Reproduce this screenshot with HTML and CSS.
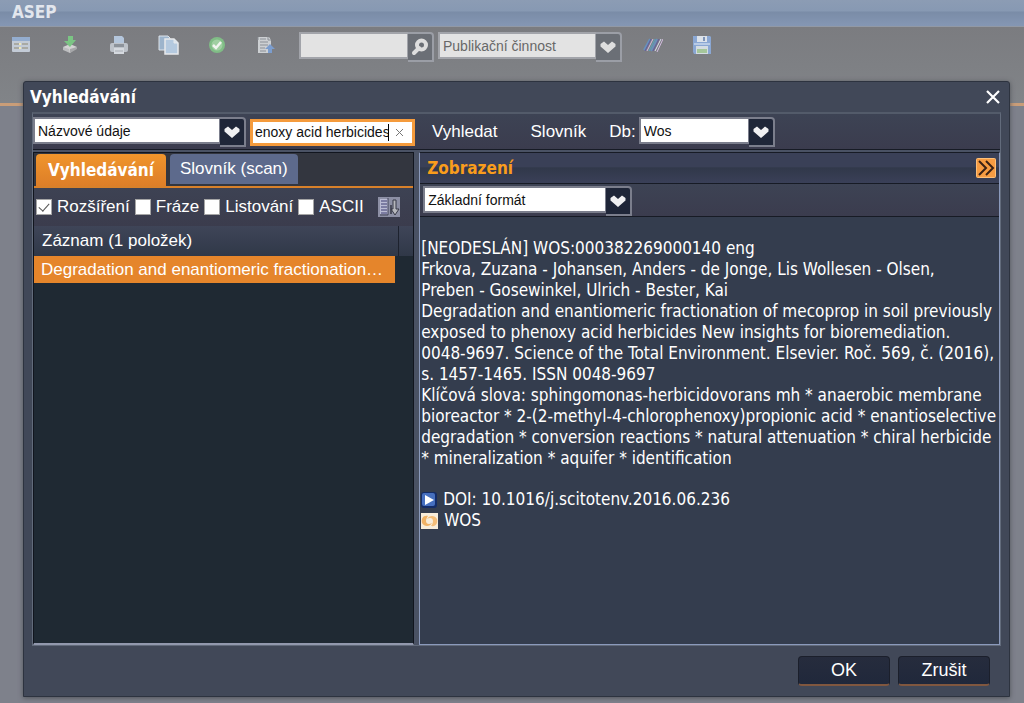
FILE: index.html
```html
<!DOCTYPE html>
<html lang="cs">
<head>
<meta charset="utf-8">
<title>ASEP</title>
<link rel="stylesheet" href="styles.css">
</head>
<body>
<svg width="0" height="0" class="defs" aria-hidden="true">
  <symbol id="chevron" viewBox="0 0 18 14"><path d="M1.500 4 L5 1.500 L9 5 L13 1.500 L16.500 4 V6.500 L9 13 L1.500 6.500 Z" fill="currentColor"/></symbol>
</svg>
<header class="app-title">ASEP</header>
<main class="app">
  <div class="app-bar">
    <button class="tool" aria-label="Formulář"><svg width="20" height="18" viewBox="0 0 20 18"><rect x="1" y="1" width="18" height="15" rx="1" fill="#c3cbd6"/><rect x="1" y="1" width="18" height="4" fill="#94adcf"/><path d="M3 8h6M11 8h6M3 12h6M11 12h6" stroke="#a9aaa4" stroke-width="2"/><path d="M8 8h2M8 12h2" stroke="#eee7b9" stroke-width="2"/></svg></button>
    <button class="tool" aria-label="Import"><svg width="18" height="20" viewBox="0 0 18 20"><path d="M2 12 L9 9 L16 12 L9 18 Z" fill="#d3d3d3"/><path d="M2 12 L8 14 L9 18 L2 15 Z" fill="#bcbdbf"/><path d="M9 14 L16 12 V14 L9 18 Z" fill="#a6a7a9"/><path d="M7 1h5v4h3L9 12 3 6h4z" fill="#7bc584"/></svg></button>
    <button class="tool" aria-label="Tisk"><svg width="20" height="20" viewBox="0 0 20 20"><path d="M5 1h8l2 2v7H5z" fill="#b4c6dc"/><rect x="1" y="8" width="18" height="9" rx="2" fill="#bdc2c9"/><path d="M5 9h10v3H5z" fill="#8d939b"/><path d="M5 13h10v6H5z" fill="#d5d9df"/><path d="M6 16h8" stroke="#a7acb3"/></svg></button>
    <button class="tool" aria-label="Kopírovat"><svg width="22" height="22" viewBox="0 0 22 22"><path d="M2 2h9l2 2v12H2z" fill="#9db4cc" stroke="#dde3e9"/><path d="M8 5h9l4 4v11H8z" fill="#b4c9df" stroke="#e7e9ec" stroke-width="1.500"/><path d="M17 5v4h4" fill="#d9e3ed" stroke="#e7e9ec"/></svg></button>
    <button class="tool" aria-label="Potvrdit"><svg width="18" height="18" viewBox="0 0 18 18"><circle cx="9" cy="9" r="8" fill="#80bd86"/><circle cx="9" cy="9" r="5.500" fill="#a0cfa2"/><path d="M5 9l3 3 5-6" fill="none" stroke="#f1f4f0" stroke-width="2.500"/></svg></button>
    <button class="tool" aria-label="Export záznamu"><svg width="20" height="20" viewBox="0 0 20 20"><path d="M2 2h11l2 3v13H2z" fill="#cdd0d3"/><path d="M2 2v3M4 4h6M4 7h8M4 10h8M4 13h5M4 16h6M12 2v3h3" fill="none" stroke="#8a8f96"/><path d="M14 9l5 5h-3v4h-4v-4H9z" fill="#7b9dce"/></svg></button>
    <div class="combo muted search">
      <input type="text" aria-label="Hledat">
      <button class="arrow" aria-label="Spustit hledání"><svg width="18" height="18" viewBox="0 0 18 18"><circle cx="10.500" cy="7" r="4.500" fill="none" stroke="currentColor" stroke-width="4"/><path d="M8 10 L3 15" stroke="currentColor" stroke-width="4" stroke-linecap="round"/></svg></button>
    </div>
    <div class="combo muted source">
      <select aria-label="Databáze"><option>Publikační činnost</option></select>
      <span class="arrow"><svg width="18" height="14"><use href="#chevron"/></svg></span>
    </div>
    <button class="tool" aria-label="Čárový kód"><svg width="20" height="18" viewBox="0 0 20 18"><path d="M1 14L7 3M8 15L14 3" stroke="#6890ba" stroke-width="2"/><path d="M4 15L10 3M14 16L20 3" stroke="#d4bce0"/><path d="M6 15L12 3" stroke="#56a6bb"/><path d="M2 15L8 3M10 15L16 3" stroke="#6258a0"/><path d="M12 15L18 3" stroke="#dcdff0"/></svg></button>
    <button class="tool" aria-label="Uložit"><svg width="20" height="20" viewBox="0 0 20 20"><path d="M1 1h17l1 1v17H2l-1-2z" fill="#8aa7d3"/><path d="M5 1h10v6H5z" fill="#dce2ea"/><path d="M12 2v4" stroke="#7d93b7" stroke-width="2"/><path d="M2 9h16" stroke="#b8cbe6" stroke-width="2"/><path d="M4 11h12v8H4z" fill="#d4dce2"/><path d="M5 14h10v4H5z" fill="#a5c69a"/></svg></button>
  </div>
</main>

<section class="dialog" role="dialog" aria-labelledby="dialog-title">
  <header class="dialog-head">
    <h1 id="dialog-title">Vyhledávání</h1>
    <button class="close" aria-label="Zavřít"><svg width="16" height="16" viewBox="0 0 16 16"><path d="M2 2l12 12M14 2L2 14" stroke="#fff" stroke-width="2.200"/></svg></button>
  </header>
  <div class="frame">
    <div class="query-bar">
      <div class="combo field">
        <select aria-label="Pole"><option>Názvové údaje</option></select>
        <span class="arrow"><svg width="18" height="14"><use href="#chevron"/></svg></span>
      </div>
      <div class="term">
        <input type="text" aria-label="Hledaný výraz" value="enoxy acid herbicides">
        <span class="caret"></span>
        <button aria-label="Vymazat"><svg width="9" height="9" viewBox="0 0 9 9"><path d="M1 1l7 7M8 1L1 8" stroke="#777"/></svg></button>
      </div>
      <button class="action">Vyhledat</button>
      <button class="action dictionary">Slovník</button>
      <label class="db-label" for="db">Db:</label>
      <div class="combo db">
        <select id="db"><option>Wos</option></select>
        <span class="arrow"><svg width="18" height="14"><use href="#chevron"/></svg></span>
      </div>
    </div>
    <div class="panes">
      <section class="results">
        <div class="tabs">
          <button class="tab active">Vyhledávání</button>
          <button class="tab">Slovník (scan)</button>
        </div>
        <div class="options">
          <label><input type="checkbox" checked>Rozšíření</label>
          <label><input type="checkbox">Fráze</label>
          <label><input type="checkbox">Listování</label>
          <label><input type="checkbox">ASCII</label>
          <button class="sort" aria-label="Řazení"><svg width="22" height="20" viewBox="0 0 22 20"><rect width="22" height="20" fill="#8d90a5"/><path d="M2 2h8v15H2z" fill="#b9bbd3"/><path d="M3 4h6M3 7h6M3 10h6M3 13h6M3 16h6" stroke="#3e3f73"/><path d="M10 1v17H2" fill="none" stroke="#42455d"/><path d="M12 17V8h2v9z" fill="#4b4d5c"/><path d="M15 3h3v9h3l-4 6-4-6h2z" fill="#b7b8bd" stroke="#373946"/></svg></button>
        </div>
        <table class="records">
          <thead><tr><th>Záznam (1 položek)</th><th class="gutter"></th></tr></thead>
          <tbody><tr><td><div>Degradation and enantiomeric fractionation…</div></td><td></td></tr></tbody>
        </table>
      </section>
      <section class="preview">
        <header class="preview-head">
          <h2>Zobrazení</h2>
          <button class="expand" aria-label="Rozbalit"><svg width="20" height="20" viewBox="0 0 20 20"><rect x="0.500" y="0.500" width="19" height="19" rx="1" fill="#f79c42" stroke="#ffc078"/><path d="M3 3l7 7-7 7M10 3l7 7-7 7" fill="none" stroke="#3a2115" stroke-width="2"/></svg></button>
        </header>
        <div class="format-bar">
          <div class="combo format">
            <select aria-label="Formát"><option>Základní formát</option></select>
            <span class="arrow"><svg width="18" height="14"><use href="#chevron"/></svg></span>
          </div>
        </div>
        <article class="record">
          <p>[NEODESLÁN] WOS:000382269000140 eng</p>
          <p>Frkova, Zuzana - Johansen, Anders - de Jonge, Lis Wollesen - Olsen,<br>Preben - Gosewinkel, Ulrich - Bester, Kai</p>
          <p>Degradation and enantiomeric fractionation of mecoprop in soil previously<br>exposed to phenoxy acid herbicides New insights for bioremediation.</p>
          <p>0048-9697. Science of the Total Environment. Elsevier. Roč. 569, č. (2016),<br>s. 1457-1465. ISSN 0048-9697</p>
          <p>Klíčová slova: sphingomonas-herbicidovorans mh * anaerobic membrane<br>bioreactor * 2-(2-methyl-4-chlorophenoxy)propionic acid * enantioselective<br>degradation * conversion reactions * natural attenuation * chiral herbicide<br>* mineralization * aquifer * identification</p>
          <p class="link first"><a href="#doi"><svg width="16" height="16" viewBox="0 0 16 16"><rect width="16" height="16" rx="3" fill="#142c66"/><rect x="1" y="1" width="13" height="13" rx="2" fill="#466fbe"/><path d="M4 3l9 5-9 5z" fill="#fff"/></svg>DOI: 10.1016/j.scitotenv.2016.06.236</a></p>
          <p class="link"><a href="#wos"><svg width="17" height="16" viewBox="0 0 17 16"><rect width="17" height="16" fill="#f8eddb"/><path d="M7 3C2 2 0 6 1 10c2 4 8 4 10 0-3 2-6 1-6-2 0-2 1-4 2-5z" fill="#f0b266"/><path d="M10 13c5 1 7-3 6-7-2-4-8-4-10 0 3-2 6-1 6 2 0 2-1 4-2 5z" fill="#f5bd78"/></svg>WOS</a></p>
        </article>
      </section>
    </div>
  </div>
  <footer class="dialog-foot">
    <button>OK</button>
    <button>Zrušit</button>
  </footer>
</section>
</body>
</html>
```
FILE: styles.css
```css
* { box-sizing: border-box; }
html, body { height: 100%; }
body {
  margin: 0;
  display: flex;
  flex-direction: column;
  position: relative;
  overflow: hidden;
  background: #7e818b;
  color: #fff;
  font-family: "Liberation Sans", Arial, sans-serif;
  font-size: 17px;
}
button, input, select { font: inherit; color: inherit; margin: 0; }
button { padding: 0; border: 0; background: none; }
svg { display: block; }
h1, h2, p { margin: 0; }
.defs { position: absolute; }

.app-title {
  height: 27px;
  padding-left: 12px;
  background: linear-gradient(#8c9cb4 0, #8799b3 11px, #7a8ca7 12px, #8496b3 25px);
  border-bottom: 1px solid #9299a5;
  color: #e2e6ed;
  font: bold 17px/24px "DejaVu Sans Condensed", "Noto Sans", sans-serif;
}
.app-bar {
  display: flex;
  align-items: flex-start;
  height: 79px;
  padding-top: 5px;
  background: linear-gradient(#7b7c80, #818488);
  border-bottom: 3px solid #c99d78;
}
.tool { flex: none; width: 49px; height: 26px; display: grid; place-items: center; }
.tool:first-child { width: 41px; margin-right: 4px; }
.app-bar .search { margin-left: 9px; }
.app-bar .source { margin: 0 6px 0 4px; }

.combo { display: flex; align-items: flex-start; height: 30px; font-size: 14px; }
.combo select, .combo input {
  flex: 1;
  min-width: 0;
  height: 27px;
  padding: 0 0 0 3px;
  appearance: none;
  border: 2px solid #7b7e8c;
  border-right-width: 1px;
  border-radius: 0;
  background: #fff;
  color: #111;
}
.combo .arrow {
  width: 26px;
  height: 30px;
  display: grid;
  place-items: center;
  border: 2px solid #7b7e8c;
  border-left: 0;
  border-radius: 0 4px 0 0;
  background: #1f2638;
  color: #f0f0f2;
}
.combo.muted select, .combo.muted input { background: #e3e3e3; border-color: #a2a4aa; color: #686868; }
.combo.muted .arrow { background: #6b6f76; border-color: #9b9ea6; color: #dedede; }
.search { width: 135px; }
.source { width: 184px; }

.dialog {
  position: absolute;
  inset: 81px 14px 6px 23px;
  display: flex;
  flex-direction: column;
  padding: 0 8px;
  border: 1px solid #2d333f;
  border-radius: 3px 3px 0 0;
  background: #414858;
  box-shadow: 0 1px 5px #505359;
}
.dialog-head { display: flex; justify-content: space-between; height: 30px; }
.dialog-head h1 { margin-left: -2px; font: bold 17px/30px "DejaVu Sans Condensed", "Noto Sans", sans-serif; }
.close { display: grid; place-items: center; width: 16px; height: 29px; }
.frame {
  flex: 1;
  min-height: 0;
  display: flex;
  flex-direction: column;
  border: 1px solid #626b7b;
  border-top-width: 2px;
  border-top-color: #535b6a;
}
.query-bar {
  display: flex;
  align-items: center;
  height: 36px;
  padding-top: 1px;
  border-bottom: 1px solid #171b25;
  background: linear-gradient(#3d4354, #3b3c4e);
}
.field { width: 213px; }
.term {
  display: flex;
  align-items: center;
  width: 165px;
  height: 27px;
  margin-left: 4px;
  border: 3px solid #f59b3c;
  background: #fff;
  color: #111;
  font-size: 14px;
}
.term input { width: 135px; padding: 0 0 0 2px; border: 0; background: none; outline: 0; }
.caret { width: 1px; height: 17px; background: #000; }
.term button { display: grid; place-items: center; width: 21px; height: 20px; }
.action { margin-left: 17px; }
.dictionary { margin-left: 33px; }
.db-label { margin-left: 23px; }
.db { width: 136px; margin-left: 3px; }

.panes { flex: 1; min-height: 0; display: grid; grid-template-columns: 382fr 582fr; gap: 5px; padding-top: 2px; background: #4a5264; }
.results { min-width: 0; border: 1px solid #11151e; border-bottom: 2px solid #9298ad; background: #1f2933; }
.tabs {
  display: flex;
  gap: 4px;
  height: 35px;
  padding: 1px 2px 0;
  border-bottom: 2px solid #d8812a;
  background: #33363f;
}
.tab { height: 30px; padding: 0 10px; border-radius: 4px 4px 0 0; background: #5d6a8c; }
.tab.active { height: 32px; padding: 0 12px; background: linear-gradient(#f0952c, #dd7e28); font: bold 17px/30px "DejaVu Sans Condensed", "Noto Sans", sans-serif; }
.options { display: flex; align-items: center; gap: 5px; height: 38px; padding-left: 2px; background: linear-gradient(#3d4253, #3b3c4d); }
.options label { display: flex; align-items: center; gap: 5px; }
.options input {
  appearance: none;
  width: 16px;
  height: 16px;
  border: 1px solid #a5a5a5;
  background: #fff;
}
.options input:checked { position: relative; }
.options input:checked::after {
  content: "";
  position: absolute;
  left: 4px;
  top: 1px;
  width: 5px;
  height: 9px;
  border: solid #555;
  border-width: 0 1px 1px 0;
  rotate: 42deg;
}
.sort { margin-left: 9px; }
.records { width: 100%; table-layout: fixed; border-spacing: 0; }
.records th { height: 30px; padding: 0 0 0 8px; text-align: left; font-weight: normal; line-height: 28px; background: linear-gradient(#3f4558, #303848); }
.records .gutter { width: 15px; border-left: 1px solid #1d222e; }
.records td { padding: 0; }
.records td div {
  margin-right: 3px;
  padding-left: 7px;
  overflow: hidden;
  background: #e5852b;
  line-height: 27px;
  white-space: nowrap;
  text-overflow: ellipsis;
}

.preview { min-width: 0; display: flex; flex-direction: column; border: 1px solid #8b9abc; border-top-color: #171b25; background: #343d4e; }
.preview-head {
  display: flex;
  align-items: center;
  justify-content: space-between;
  height: 31px;
  padding: 0 3px 0 7px;
  border-bottom: 1px solid #171b25;
  background: linear-gradient(#3a4057 0 45%, #31384a 50%, #3a4058);
}
.preview-head h2 { color: #f99d1c; font: bold 17px/30px "DejaVu Sans Condensed", "Noto Sans", sans-serif; }
.format-bar { height: 33px; padding: 2px 3px; border-bottom: 1px solid #171b25; background: linear-gradient(#3d4354, #3b3c4e); }
.format { width: 209px; }
.record { flex: 1; padding: 21px 0 0 1px; overflow: hidden; white-space: nowrap; font: 17px/21px "DejaVu Sans Condensed", "Noto Sans", sans-serif; }
.link a { display: flex; align-items: center; gap: 6px; color: inherit; text-decoration: none; }
.first { margin-top: 20px; }

.dialog-foot { display: flex; justify-content: flex-end; gap: 8px; padding: 10px 11px 10px 0; }
.dialog-foot button {
  width: 92px;
  height: 30px;
  border: 1px solid #1b1f2b;
  border-bottom: 2px solid #80573f;
  border-radius: 4px;
  background: linear-gradient(#262c3d, #20283b);
  font-size: 18px;
}
```
